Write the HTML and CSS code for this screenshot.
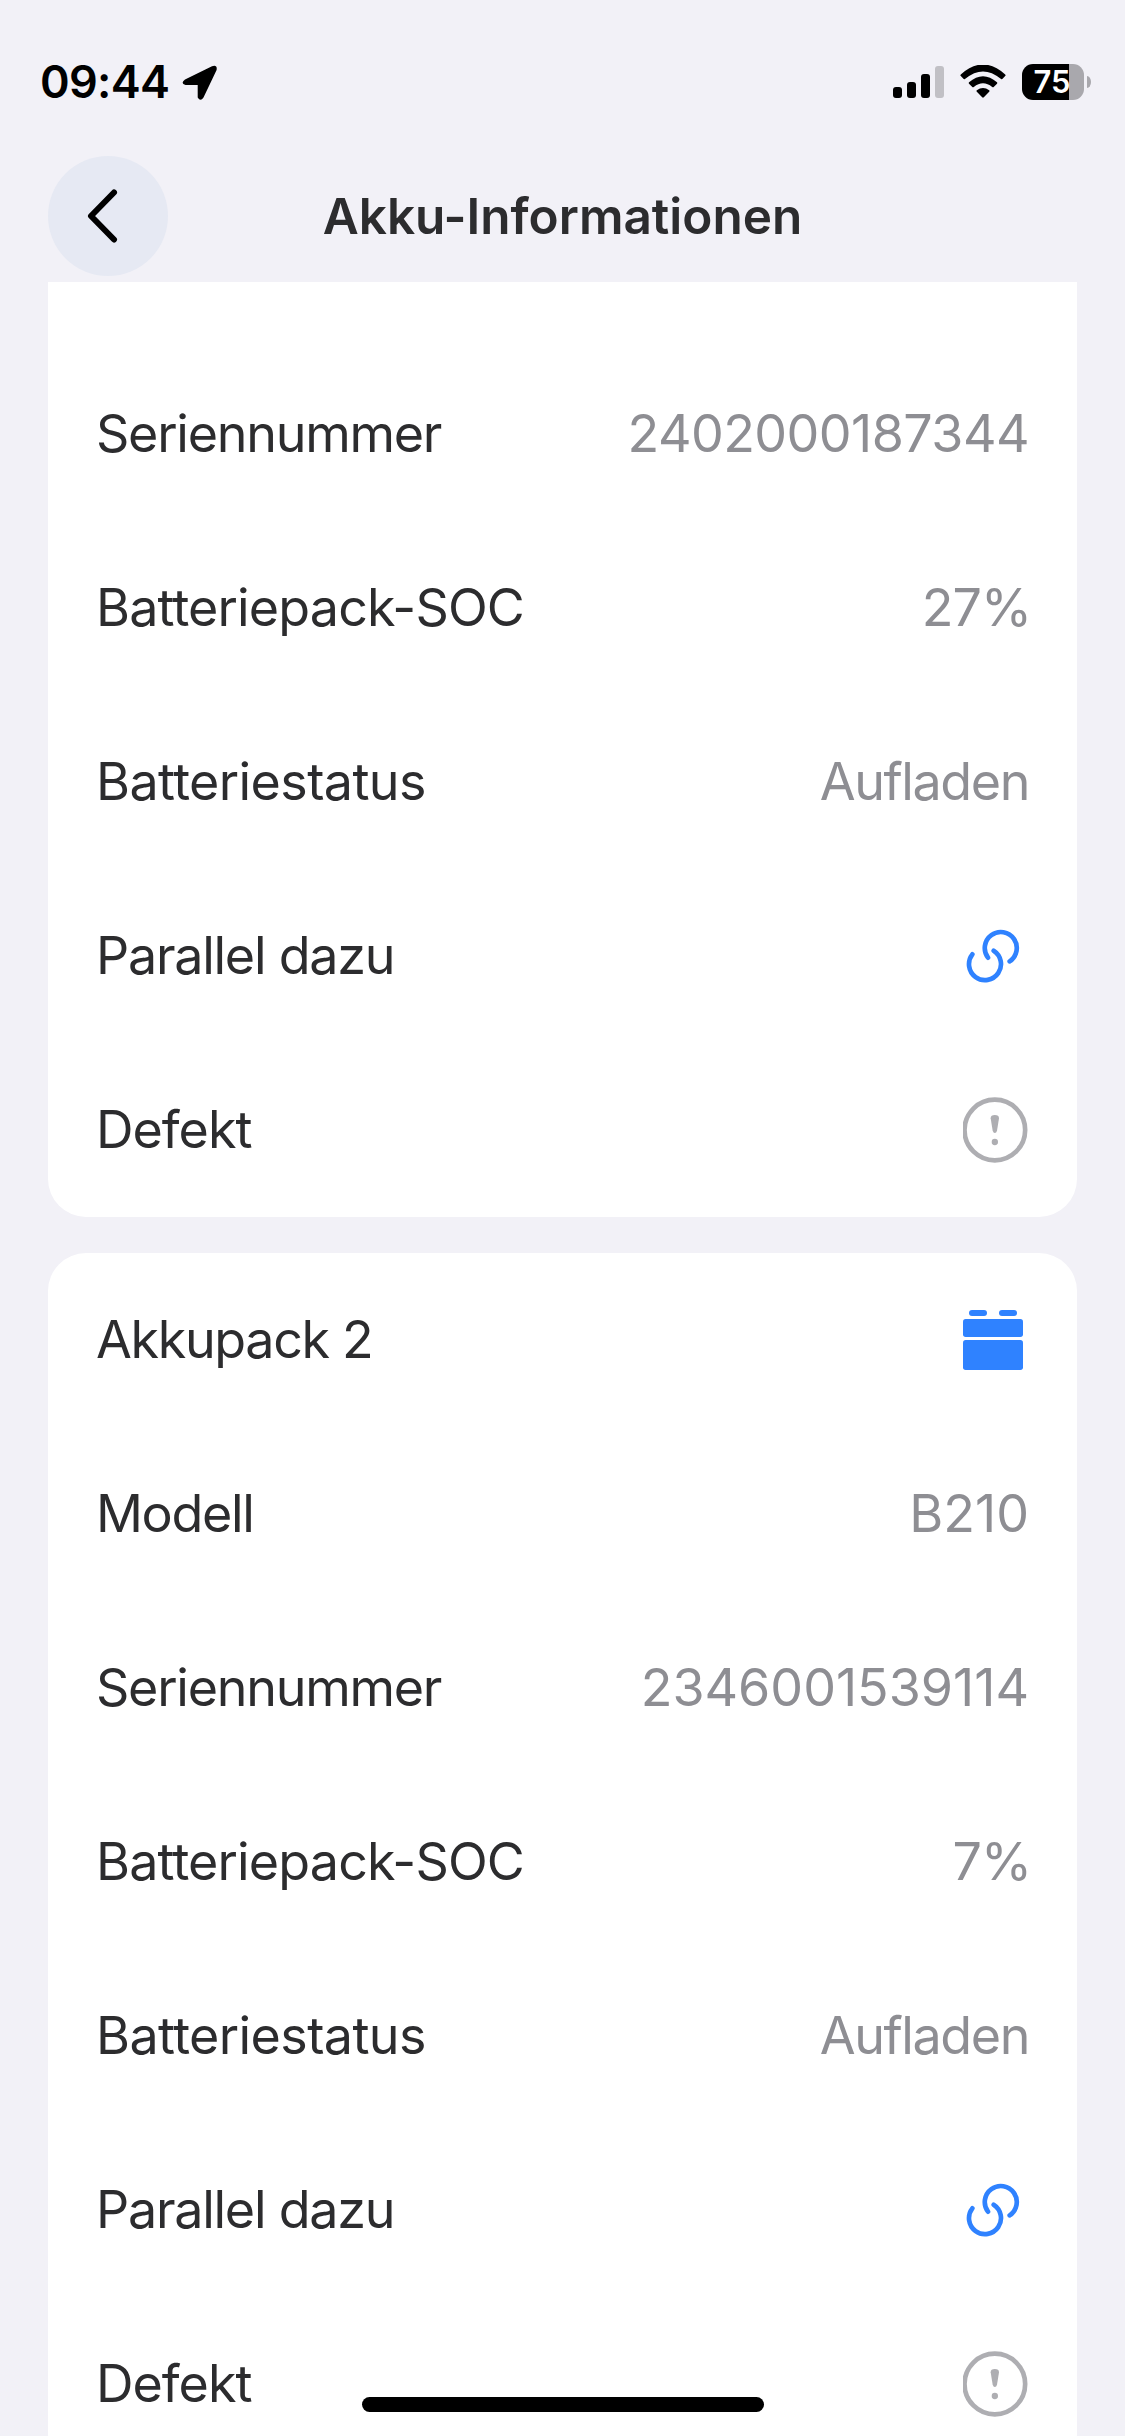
FILE: index.html
```html
<!DOCTYPE html>
<html lang="de">
<head>
<meta charset="utf-8">
<title>Akku-Informationen</title>
<link rel="stylesheet" href="styles.css">
</head>
<body>
<svg class="sprite" aria-hidden="true">
  <symbol id="link" viewBox="99 69 198 198">
    <path d="M174 173A48 48 0 1 1 239 184M191 152A48 48 0 1 1 127 163" fill="none" stroke="#2f82ff" stroke-width="14" stroke-linecap="round"/>
  </symbol>
  <symbol id="alert" viewBox="99 591 198 198">
    <circle cx="194.5" cy="690" r="91" fill="none" stroke="#aeaeb2" stroke-width="14"/>
    <path d="M182 655Q182 645 194.500 645Q207 645 207 655L201 692Q199 699 194.500 699Q190 699 188 692Z" fill="#aeaeb2"/>
    <circle cx="194.500" cy="726" r="9.500" fill="#aeaeb2"/>
  </symbol>
  <symbol id="pack" viewBox="99 201 198 198">
    <g fill="#2f82ff">
      <rect x="117" y="210" width="54" height="18" rx="9"/>
      <rect x="207" y="210" width="54" height="18" rx="9"/>
      <rect x="99" y="237" width="180" height="54" rx="8"/>
      <rect x="99" y="300" width="180" height="90" rx="8"/>
    </g>
  </symbol>
</svg>
<div class="screen">
  <div class="status">
    <span class="time">09:44</span>
    <svg class="location" width="36" height="36" viewBox="0 0 36 36"><path d="M3 14.500 30 1.300Q35.500-.5 34.600 5L21.500 32.500Q18.500 37 15.700 32.500V20H3.500Q-2 18.500 3 14.500Z"/></svg>
    <svg class="signal" width="51" height="32" viewBox="0 0 51 32"><rect y="21" width="9" height="11" rx="3"/><rect x="14" y="16" width="9" height="16" rx="3"/><rect x="28" y="8" width="9" height="24" rx="3"/><rect x="42" width="9" height="32" rx="3" fill="#c1c0c5"/></svg>
    <svg class="wifi" width="46" height="34" viewBox="0 0 46 34"><path d="M.8 9.400Q23-10.500 45.200 9.400Q46 10.200 45.200 11L42.300 13.900Q41.500 14.500 40.700 13.800Q23-1 5.300 13.800Q4.500 14.500 3.700 13.900L.8 11Q0 10.200.8 9.400Z"/><path d="M9 17.300Q23 5.300 37 17.300Q37.700 18 37 18.700L33.700 22Q33 22.600 32.200 22Q23 14.500 13.800 22Q13 22.600 12.300 22L9 18.700Q8.300 18 9 17.300Z"/><path d="M16.800 25.200Q23 20.800 29.200 25.200Q30 25.900 29.200 26.700L23.800 32.300Q23 33.100 22.200 32.300L16.800 26.700Q16 25.900 16.800 25.200Z"/></svg>
    <div class="battery">75</div>
    <div class="nub"></div>
  </div>
  <header class="bar">
    <div class="back"><svg width="32" height="56" viewBox="0 0 32 56"><path d="M28 4.500 5 28 28 51.500" fill="none" stroke="#000" stroke-width="6" stroke-linecap="round" stroke-linejoin="round"/></svg></div>
    <h1 class="title">Akku-Informationen</h1>
  </header>
  <main class="list">
    <section class="card card-scrolled">
      <div class="row"><span>Seriennummer</span><span class="value serial">2402000187344</span></div>
      <div class="row"><span class="label-soc">Batteriepack-SOC</span><span class="value percent">27%</span></div>
      <div class="row"><span class="label-status">Batteriestatus</span><span class="value state">Aufladen</span></div>
      <div class="row"><span>Parallel dazu</span><svg class="icon"><use href="#link"/></svg></div>
      <div class="row"><span class="label-fault">Defekt</span><svg class="icon"><use href="#alert"/></svg></div>
    </section>
    <section class="card">
      <div class="row"><span class="label-short">Akkupack 2</span><svg class="icon"><use href="#pack"/></svg></div>
      <div class="row"><span class="label-short">Modell</span><span class="value">B210</span></div>
      <div class="row"><span>Seriennummer</span><span class="value">2346001539114</span></div>
      <div class="row"><span class="label-soc">Batteriepack-SOC</span><span class="value percent">7%</span></div>
      <div class="row"><span class="label-status">Batteriestatus</span><span class="value state">Aufladen</span></div>
      <div class="row"><span>Parallel dazu</span><svg class="icon"><use href="#link"/></svg></div>
      <div class="row"><span class="label-fault">Defekt</span><svg class="icon"><use href="#alert"/></svg></div>
    </section>
  </main>
  <div class="home"></div>
</div>
</body>
</html>
```
FILE: styles.css
```css
* { box-sizing: border-box; }
body { margin: 0; background: #f2f1f7; font-family: Inter, "Liberation Sans", sans-serif; }
.sprite { display: none; }
.screen { position: relative; width: 1125px; height: 2436px; overflow: hidden; display: flex; flex-direction: column; }
.status { flex: none; height: 156px; padding: 64px 34px 0 40px; display: flex; align-items: flex-start; }
.time { font-size: 45px; line-height: 36px; font-weight: 600; letter-spacing: -0.7px; width: 142px; white-space: nowrap; }
.location { margin-top: 1px; }
.signal { margin: 2px 16px 0 auto; }
.wifi { margin: 1px 16px 0 0; }
.battery { width: 62px; height: 36px; padding-right: 2px; border-radius: 11px; background: linear-gradient(90deg, #000 47px, #a9a8ad 47px); color: #fff; font-size: 31px; line-height: 36px; font-weight: 600; text-align: center; }
.nub { width: 4px; height: 12px; margin: 12px 0 0 3px; border-radius: 0 4px 4px 0 / 0 6px 6px 0; background: #a9a8ad; }
.bar { flex: none; height: 126px; padding: 0 48px; display: grid; grid-template-columns: 120px 1fr 120px; align-items: start; }
.back { width: 120px; height: 120px; border-radius: 50%; background: #e6e9f3; display: flex; align-items: center; padding-left: 38px; }
.title { margin: 0; text-align: center; white-space: nowrap; font-size: 49.5px; line-height: 120px; font-weight: 600; color: #2c2c2e; }
.list { flex: 1; min-height: 0; padding: 0 48px; display: flex; flex-direction: column; gap: 36px; }
.card { flex: none; background: #fff; border-radius: 38px; padding: 0 48px; }
.card-scrolled { padding-top: 65px; border-radius: 0 0 38px 38px; }
.row { height: 174px; display: flex; align-items: center; justify-content: space-between; font-size: 52px; line-height: 60px; letter-spacing: -1.25px; color: #2c2c2e; white-space: nowrap; }
.label-soc { letter-spacing: -0.85px; }
.label-status { letter-spacing: -0.6px; }
.label-short { letter-spacing: -1.35px; }
.label-fault { letter-spacing: -1px; }
.value { color: #8e8e93; letter-spacing: 0; }
.serial { letter-spacing: -0.55px; }
.percent { letter-spacing: -1px; margin-right: -2px; }
.state { letter-spacing: -1.4px; margin-right: 0; }
.icon { width: 66px; height: 66px; flex: none; }
.home { position: absolute; left: 362px; top: 2397px; width: 402px; height: 15px; border-radius: 8px; background: #000; }
```
